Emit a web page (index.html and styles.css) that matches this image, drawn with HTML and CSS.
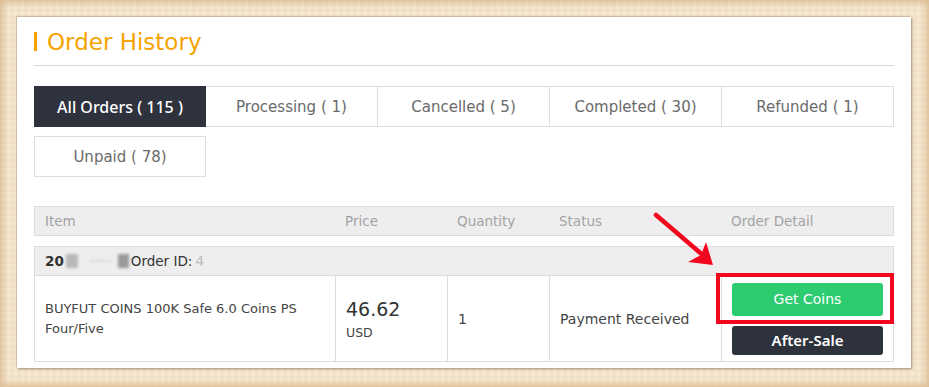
FILE: index.html
```html
<!doctype html>
<html>
<head>
  <meta charset="utf-8">
  <title>Order History</title>
  <link rel="stylesheet" href="styles.css">
</head>
<body>
  <div class="frame">
    <div class="panel">
      <h2 class="title">Order History</h2>

      <div class="tabs">
        <div class="tab active">All Orders ( 115 )</div>
        <div class="tab">Processing ( 1)</div>
        <div class="tab">Cancelled ( 5)</div>
        <div class="tab">Completed ( 30)</div>
        <div class="tab">Refunded ( 1)</div>
        <div class="tab">Unpaid ( 78)</div>
      </div>

      <div class="orders">
        <div class="row head">
          <div class="cell">Item</div>
          <div class="cell">Price</div>
          <div class="cell">Quantity</div>
          <div class="cell">Status</div>
          <div class="cell">Order Detail</div>
        </div>

        <div class="order-id">
          <b>20</b><span class="blur b1"></span><span class="blur b2"></span><span class="blur b3"></span>Order ID: <span class="faded">4</span>
        </div>
        <div class="row item">
          <div class="cell name">BUYFUT COINS 100K Safe 6.0 Coins PS Four/Five</div>
          <div class="cell price"><span class="amount">46.62</span><span class="cur">USD</span></div>
          <div class="cell qty">1</div>
          <div class="cell status">Payment Received</div>
          <div class="cell detail">
            <a class="btn green">Get Coins</a>
            <a class="btn dark">After-Sale</a>
          </div>
        </div>

        <div class="highlight"></div>
        <svg class="arrow" width="70" height="60" viewBox="0 0 70 60">
          <line x1="3" y1="4" x2="52" y2="46" stroke="#f2071f" stroke-width="4.5" stroke-linecap="round"/>
          <polygon points="60,54 53,31 48,44 35,51" fill="#f2071f"/>
        </svg>
      </div>
    </div>
  </div>
</body>
</html>
```

FILE: styles.css
```css
html, body {
  margin: 0;
  height: 100%;
}
body {
  font-family: "DejaVu Sans", "Noto Sans", sans-serif;
  background-color: #f1dfc4;
  background-image:
    repeating-linear-gradient(90deg, rgba(255,255,255,0.18) 0 3px, rgba(0,0,0,0) 3px 7px),
    repeating-linear-gradient(0deg, rgba(255,255,255,0.15) 0 3px, rgba(0,0,0,0) 3px 6px);
  box-shadow: inset 0 0 6px 3px #dcbd94;
}
.frame {
  padding: 17px 18px 19px 17px;
  box-sizing: border-box;
  height: 100%;
}
.panel {
  background: #fff;
  height: 100%;
  box-sizing: border-box;
  padding: 10px 17px 0 17px;
  box-shadow: 1px 1px 2px rgba(90,70,40,0.55), -1px -1px 1px rgba(120,100,70,0.25);
}

.title {
  margin: 0;
  height: 39px;
  box-sizing: border-box;
  border-bottom: 1px solid #d8d8d8;
  color: #f5a300;
  font-weight: 400;
  font-size: 23px;
  line-height: 30px;
  display: flex;
  align-items: flex-start;
}
.title::before {
  content: "";
  width: 3px;
  height: 19px;
  background: #f5a300;
  margin: 5px 10px 0 0;
}

.tabs {
  margin-top: 20px;
  display: grid;
  grid-template-columns: repeat(5, 172px);
  row-gap: 9px;
}
.tab {
  height: 41px;
  box-sizing: border-box;
  border: 1px solid #dedede;
  border-left: none;
  display: flex;
  align-items: center;
  justify-content: center;
  font-size: 15px;
  color: #6a6a6a;
}
.tab:nth-child(5n+1) {
  border-left: 1px solid #dedede;
}
.tab.active {
  background: #2e323d;
  border-color: #2e323d;
  color: #fff;
  font-family: "Noto Sans", sans-serif;
  font-weight: 500;
  font-size: 16px;
}

.orders {
  position: relative;
  margin-top: 29px;
  width: 860px;
}
.row {
  display: grid;
  grid-template-columns: 300px 112px 102px 172px 174px;
}
.head {
  background: #eeeeee;
  border: 1px solid #dcdcdc;
  height: 30px;
  box-sizing: border-box;
  color: #a3a3a3;
  font-size: 13.5px;
}
.head .cell {
  padding-left: 10px;
  line-height: 28px;
}
.order-id {
  margin-top: 10px;
  height: 30px;
  box-sizing: border-box;
  background: #eeeeee;
  border: 1px solid #dcdcdc;
  padding-left: 10px;
  display: flex;
  align-items: center;
  font-size: 13.5px;
  color: #333;
}
.order-id b {
  font-weight: 700;
}
.blur {
  display: inline-block;
  background: #aaa;
  filter: blur(1.5px);
  height: 14px;
}
.b1 { width: 12px; margin-left: 2px; opacity: 0.8; }
.b2 { width: 22px; margin-left: 12px; height: 2px; opacity: 0.3; }
.b3 { width: 11px; margin-left: 6px; margin-right: 2px; background: #999; }
.faded {
  color: #bbb;
  margin-left: 3px;
}

.item {
  height: 86px;
  border: 1px solid #dcdcdc;
  border-top: none;
  box-sizing: border-box;
  color: #444;
}
.item .cell {
  border-left: 1px solid #dcdcdc;
  padding: 0 10px;
  display: flex;
  flex-direction: column;
  justify-content: center;
}
.item .cell:first-child {
  border-left: none;
}
.name {
  font-size: 13px;
  line-height: 20px;
}
.amount {
  font-size: 19px;
  line-height: 26px;
  color: #333;
  padding-top: 2px;
}
.cur {
  font-size: 12.5px;
  line-height: 20px;
  margin-top: 1px;
}
.qty, .status {
  font-size: 14px;
}
.detail {
  gap: 10px;
}
.item .detail {
  padding-right: 12px;
}
.btn {
  display: flex;
  align-items: center;
  justify-content: center;
  border-radius: 3px;
  color: #fff;
  font-size: 14px;
}
.green {
  background: #2ecc71;
  height: 33px;
}
.dark {
  background: #2e323d;
  height: 29px;
  font-family: "Noto Sans", sans-serif;
  font-weight: 600;
  font-size: 15px;
}

.highlight {
  position: absolute;
  left: 682px;
  top: 67px;
  width: 178px;
  height: 51px;
  box-sizing: border-box;
  border: 4px solid #f2071f;
}
.arrow {
  position: absolute;
  left: 619px;
  top: 5px;
}
```
